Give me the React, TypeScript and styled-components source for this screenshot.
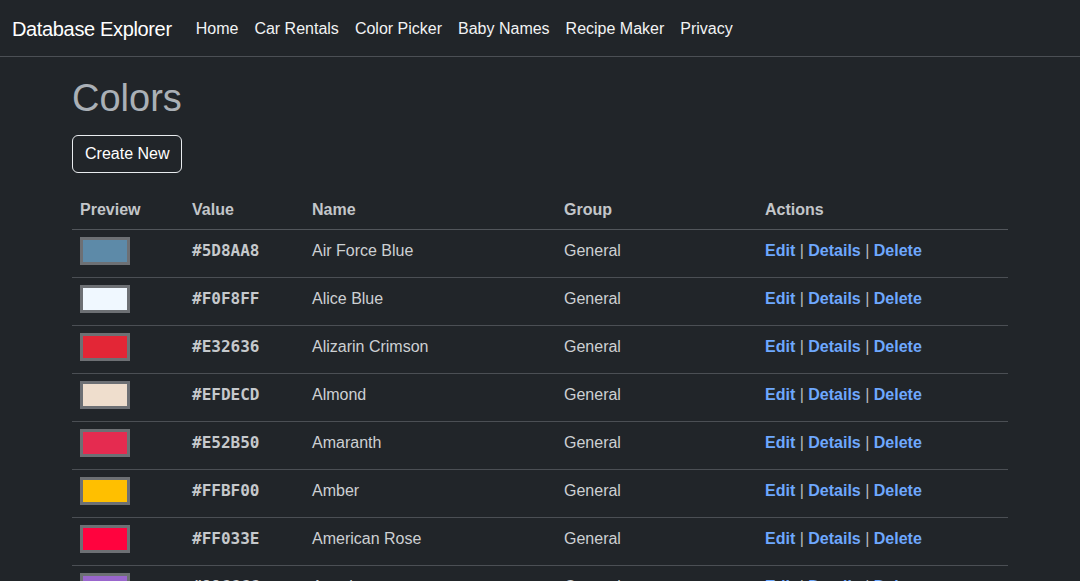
import React from "react";
import styled, { createGlobalStyle } from "styled-components";

const GlobalStyle = createGlobalStyle`
  html, body {
    margin: 0;
    padding: 0;
    background: #212529;
    color: #dee2e6;
    font-family: "Liberation Sans", Arial, Helvetica, sans-serif;
    font-size: 16px;
    line-height: 1.5;
  }
  * { box-sizing: border-box; }
`;

const NavBar = styled.nav`
  display: flex;
  align-items: center;
  height: 57px;
  padding: 9px 12px 7px;
  background: #212529;
  border-bottom: 1px solid #4b4f54;
`;

const Brand = styled.a`
  font-size: 20px;
  line-height: 30px;
  letter-spacing: -0.35px;
  color: #ffffff;
  margin-right: 16px;
  text-decoration: none;
  padding: 5px 0;
`;

const NavList = styled.div`
  display: flex;
  align-items: center;
`;

const NavLink = styled.a`
  padding: 8px;
  font-size: 16px;
  line-height: 24px;
  color: #f2f3f4;
  text-decoration: none;
`;

const Container = styled.main`
  max-width: 960px;
  margin: 0 auto;
  padding: 16px 12px 0;
`;

const Title = styled.h1`
  margin: 2px 0 14px;
  font-size: 38px;
  font-weight: 500;
  line-height: 46px;
  color: #aab0b6;
`;

const ButtonRow = styled.p`
  margin: 0 0 16px;
`;

const OutlineButton = styled.a`
  display: inline-block;
  padding: 6px 12px;
  font-size: 16px;
  line-height: 24px;
  color: #ffffff;
  border: 1px solid #e9ecef;
  border-radius: 6px;
  text-decoration: none;
`;

const Table = styled.table`
  width: 100%;
  border-collapse: collapse;
  table-layout: fixed;
`;

const HeadCell = styled.th<{ $w?: number }>`
  width: ${(p) => (p.$w ? `${p.$w}px` : "auto")};
  text-align: left;
  padding: 9px 8px 7px;
  line-height: 24px;
  font-weight: 700;
  color: #c3c6c9;
  border-bottom: 1px solid #52565b;
`;

const Cell = styled.td`
  padding: 9px 8px 7px;
  height: 48px;
  vertical-align: top;
  line-height: 24px;
  color: #cdd0d3;
  border-bottom: 1px solid #4b4f54;
`;

const Swatch = styled.div<{ $c: string }>`
  width: 50px;
  height: 28px;
  margin-top: -2px;
  background: ${(p) => p.$c};
  border: 3px solid #6d7074;
`;

const Code = styled.span`
  font-family: "DejaVu Sans Mono", "Liberation Mono", monospace;
  font-weight: 700;
  font-size: 16px;
  color: #c6c9cc;
`;

const ActionLink = styled.a`
  color: #6ea8fe;
  font-weight: 700;
  text-decoration: none;
`;

const Sep = styled.span`
  color: #b5b9bd;
`;

const colors = [
  { v: "#5D8AA8", n: "Air Force Blue" },
  { v: "#F0F8FF", n: "Alice Blue" },
  { v: "#E32636", n: "Alizarin Crimson" },
  { v: "#EFDECD", n: "Almond" },
  { v: "#E52B50", n: "Amaranth" },
  { v: "#FFBF00", n: "Amber" },
  { v: "#FF033E", n: "American Rose" },
  { v: "#9966CC", n: "Amethyst" },
];

export default function App() {
  return (
    <>
      <GlobalStyle />
      <NavBar>
        <Brand href="#">Database Explorer</Brand>
        <NavList>
          {["Home", "Car Rentals", "Color Picker", "Baby Names", "Recipe Maker", "Privacy"].map((l) => (
            <NavLink key={l} href="#">
              {l}
            </NavLink>
          ))}
        </NavList>
      </NavBar>
      <Container>
        <Title>Colors</Title>
        <ButtonRow>
          <OutlineButton href="#">Create New</OutlineButton>
        </ButtonRow>
        <Table>
          <thead>
            <tr>
              <HeadCell $w={112}>Preview</HeadCell>
              <HeadCell $w={120}>Value</HeadCell>
              <HeadCell $w={252}>Name</HeadCell>
              <HeadCell $w={201}>Group</HeadCell>
              <HeadCell>Actions</HeadCell>
            </tr>
          </thead>
          <tbody>
            {colors.map((c) => (
              <tr key={c.v}>
                <Cell>
                  <Swatch $c={c.v} />
                </Cell>
                <Cell>
                  <Code>{c.v}</Code>
                </Cell>
                <Cell>{c.n}</Cell>
                <Cell>General</Cell>
                <Cell>
                  <ActionLink href="#">Edit</ActionLink> <Sep>|</Sep>{" "}
                  <ActionLink href="#">Details</ActionLink> <Sep>|</Sep>{" "}
                  <ActionLink href="#">Delete</ActionLink>
                </Cell>
              </tr>
            ))}
          </tbody>
        </Table>
      </Container>
    </>
  );
}
